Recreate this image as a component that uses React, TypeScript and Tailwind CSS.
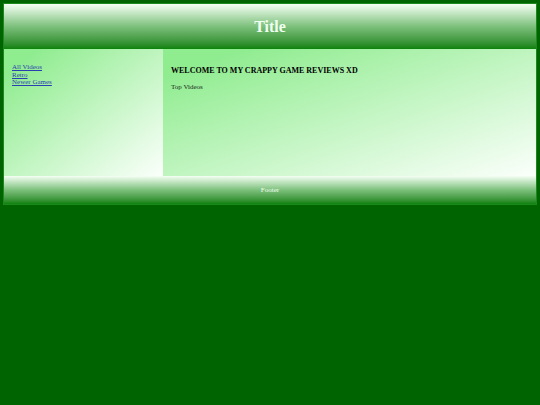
export default function App() {
  return (
    <div
      className="min-h-[405px] bg-[#006400] p-[3px]"
      style={{ fontFamily: '"Liberation Serif", "Times New Roman", serif' }}
    >
      <div className="flex flex-col border border-[#1a8a1a]">
        <header className="flex h-[45px] items-center justify-center bg-gradient-to-b from-[#f4fff4] via-[#7cc07c] to-[#0a820a]">
          <h1 className="text-[16px] font-bold text-[#f0fff0]">Title</h1>
        </header>

        <div className="flex h-[127px]">
          <nav className="flex w-[159px] flex-col bg-linear-to-br/srgb from-[#8fec8f] from-10% to-[#fbfffb] px-[8px] pt-[15px] text-[7px] leading-[7.6px]">
            <a href="#" className="text-[#2a3fb0] underline decoration-[#2a3fb0]">
              All Videos
            </a>
            <a href="#" className="text-[#2a3fb0] underline decoration-[#2a3fb0]">
              Retro
            </a>
            <a href="#" className="text-[#2a3fb0] underline decoration-[#2a3fb0]">
              Newer Games
            </a>
          </nav>

          <main className="flex-1 bg-linear-to-br/srgb from-[#8fec8f] from-10% to-[#fbfffb] px-[8px] pt-[16px]">
            <h2 className="text-[8px] font-bold text-black">WELCOME TO MY CRAPPY GAME REVIEWS XD</h2>
            <p className="mt-[5px] text-[7px] text-[#1a2a1a]">Top Videos</p>
          </main>
        </div>

        <footer className="flex h-[28px] items-center justify-center bg-gradient-to-b from-[#f4fff4] via-[#7cc07c] to-[#0a820a]">
          <span className="text-[7px] text-[#f0fff0]">Footer</span>
        </footer>
      </div>
    </div>
  )
}
